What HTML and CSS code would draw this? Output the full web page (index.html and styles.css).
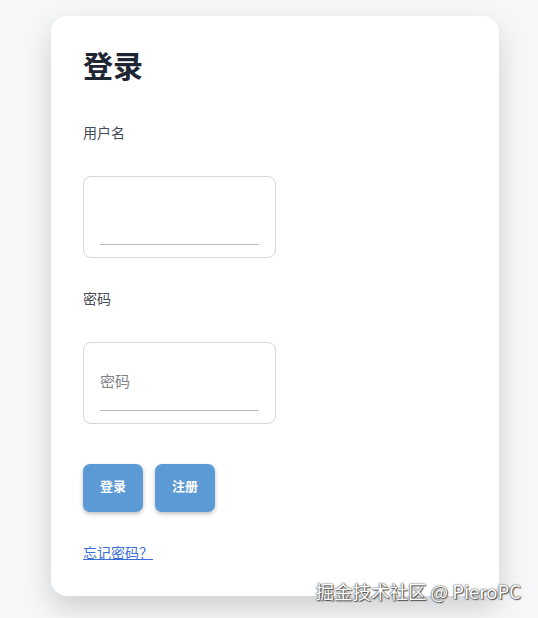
FILE: index.html
```html
<!DOCTYPE html>
<html lang="zh">
<head>
<meta charset="utf-8">
<link rel="stylesheet" href="styles.css">
</head>
<body>
<div class="card">
  <h1 class="title">登录</h1>
  <div class="label">用户名</div>
  <div class="box"><input class="field" type="text"></div>
  <div class="label label-2">密码</div>
  <div class="box"><input class="field" type="password" placeholder="密码"></div>
  <div class="actions">
    <button class="btn">登录</button>
    <button class="btn">注册</button>
  </div>
  <a class="link" href="#">忘记密码？</a>
</div>
<div class="watermark">掘金技术社区 @ PieroPC</div>
</body>
</html>
```

FILE: styles.css
```css
html, body {
  margin: 0;
  padding: 0;
}
body {
  background: #f6f7f9;
  font-family: "Noto Sans CJK SC", "Noto Sans", sans-serif;
  width: 538px;
  height: 618px;
  overflow: hidden;
  position: relative;
}
.card {
  margin: 16px 0 0 51px;
  width: 448px;
  height: 580px;
  box-sizing: border-box;
  padding: 32px;
  background: #fff;
  border-radius: 16px;
  box-shadow: 0 12px 28px rgba(0, 0, 0, 0.16);
  display: flex;
  flex-direction: column;
  align-items: flex-start;
}
.title {
  margin: -2px 0 0 0;
  font-size: 30px;
  line-height: 36px;
  font-weight: 700;
  color: #1e2533;
}
.label {
  margin-top: 40px;
  font-size: 14px;
  line-height: 20px;
  color: #444b55;
}
.label-2 {
  margin-top: 30px;
}
.box {
  margin-top: 34px;
  width: 193px;
  height: 82px;
  box-sizing: border-box;
  border: 1px solid #d6d6d9;
  border-radius: 8px;
  padding: 15px 16px 0 16px;
}
.field {
  display: block;
  width: 159px;
  height: 53px;
  box-sizing: border-box;
  border: none;
  border-bottom: 1px solid #b8b8bc;
  padding: 0 0 8px 0;
  margin: 0;
  outline: none;
  font-family: inherit;
  font-size: 15px;
  color: #333;
  background: transparent;
}
.field::placeholder {
  color: #808288;
}
.actions {
  margin-top: 40px;
  display: flex;
  gap: 12px;
}
.btn {
  width: 60px;
  height: 48px;
  border: none;
  border-radius: 7px;
  background: #5b9ad5;
  color: #fff;
  font-family: inherit;
  font-size: 13px;
  font-weight: 700;
  box-shadow: 0 2px 4px rgba(0, 0, 0, 0.25);
  padding: 0 0 5px 0;
}
.link {
  margin-top: 30px;
  font-size: 14px;
  line-height: 20px;
  color: #3b6fd8;
  text-decoration: underline;
}
.watermark {
  position: absolute;
  right: 17px;
  top: 578px;
  font-family: "Noto Sans CJK SC", "Noto Sans", sans-serif;
  font-size: 18.5px;
  line-height: 26px;
  color: #fff;
  text-shadow: 0 0 1px #444, 0 0 2px #555, 1px 1px 1px #555;
}
```
